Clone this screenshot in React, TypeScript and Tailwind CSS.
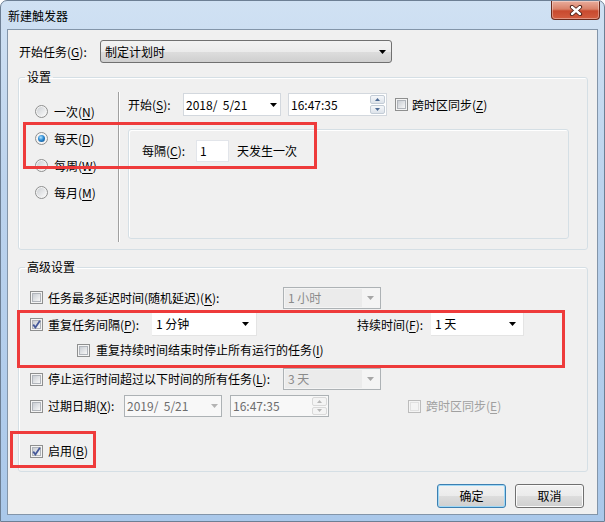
import type { ReactNode } from "react"

function K({ c }: { c: string }) {
  return <span className="underline decoration-1 underline-offset-[2px]">{c}</span>
}

function Arrow({ color = "#000" }: { color?: string }) {
  return (
    <svg width="7" height="4" viewBox="0 0 7 4" className="shrink-0">
      <path d="M0 0h7L3.5 4z" fill={color} />
    </svg>
  )
}

function Check({ checked, disabled, className = "" }: { checked?: boolean; disabled?: boolean; className?: string }) {
  return (
    <span
      className={`relative flex h-[13px] w-[13px] shrink-0 items-center justify-center border bg-[#f4f4f4] ${
        disabled ? "border-[#bcbcbc]" : "border-[#8e8f8f]"
      } ${className}`}
    >
      <span
        className={`h-[9px] w-[9px] border ${
          disabled ? "border-[#e1e1e1] bg-[#f4f4f4]" : "border-[#b0b4ba] bg-[linear-gradient(135deg,#c9cdd3,#f7f7f7)]"
        }`}
      />
      {checked && (
        <svg className="absolute left-[0px] top-[0px]" width="11" height="11" viewBox="0 0 11 11">
          <path d="M2.2 5.6 L4.4 8.4 L8.9 1.8" fill="none" stroke="#46599a" strokeWidth="1.8" />
        </svg>
      )}
    </span>
  )
}

function Radio({ checked }: { checked?: boolean }) {
  return (
    <span className="flex h-[13px] w-[13px] shrink-0 items-center justify-center rounded-full border border-[#8e8f8f] bg-[#f4f4f4]">
      <span
        className={
          checked
            ? "h-[7px] w-[7px] rounded-full bg-[radial-gradient(circle_at_40%_35%,#b3e4ff_0%,#2b8ad3_45%,#0d467f_100%)]"
            : "h-[9px] w-[9px] rounded-full bg-[linear-gradient(135deg,#cdd0d4,#fafafa)]"
        }
      />
    </span>
  )
}

function Spin({ disabled }: { disabled?: boolean }) {
  const c = disabled ? "#b7b7b7" : "#4d6a93"
  const btn = disabled
    ? "border-[#d9d9d9] bg-[#f4f4f4]"
    : "border-[#c3ccd6] bg-[linear-gradient(180deg,#f5f7fa,#dde3ea)]"
  return (
    <div className="flex h-full w-[16px] shrink-0 flex-col gap-[1px] py-[1px] pr-[1px]">
      <div className={`flex flex-1 items-center justify-center rounded-[2px] border ${btn}`}>
        <svg width="5" height="3" viewBox="0 0 5 3">
          <path d="M2.5 0L5 3H0z" fill={c} />
        </svg>
      </div>
      <div className={`flex flex-1 items-center justify-center rounded-[2px] border ${btn}`}>
        <svg width="5" height="3" viewBox="0 0 5 3">
          <path d="M0 0h5L2.5 3z" fill={c} />
        </svg>
      </div>
    </div>
  )
}

function DateBox({ value, disabled, size }: { value: string; disabled?: boolean; size: string }) {
  return (
    <div
      className={`flex items-center justify-between border pl-[2px] pr-[3px] ${size} ${
        disabled ? "border-[#adb2b5] bg-[#f8f8f8] text-[#6d6d6d]" : "border-[#d3d8de] bg-white"
      }`}
    >
      <span className="whitespace-pre">{value}</span>
      <Arrow color={disabled ? "#b4b4b4" : "#000"} />
    </div>
  )
}

function TimeBox({ disabled, size }: { disabled?: boolean; size: string }) {
  return (
    <div
      className={`flex items-center justify-between border pl-[2px] ${size} ${
        disabled ? "border-[#adb2b5] bg-[#f8f8f8] text-[#6d6d6d]" : "border-[#d3d8de] bg-white"
      }`}
    >
      <span>16:47:35</span>
      <Spin disabled={disabled} />
    </div>
  )
}

function DisCombo({ text }: { text: string }) {
  return (
    <div className="flex h-[22px] w-[98px] items-center border border-[#adb2b5] bg-[#f4f4f4] p-[1px] text-[#8a8a8a]">
      <span className="flex h-full flex-1 items-center bg-[#ebebeb] pl-[3px]">{text}</span>
      <span className="flex w-[17px] justify-center">
        <Arrow color="#a6a6a6" />
      </span>
    </div>
  )
}

function WhiteCombo({ text, size }: { text: string; size: string }) {
  return (
    <div className={`flex h-[23px] items-center justify-between border-b border-r border-[#e4e4e4] bg-white pl-[4px] pr-[7px] ${size}`}>
      <span>{text}</span>
      <Arrow />
    </div>
  )
}

function Btn({ children, primary }: { children: ReactNode; primary?: boolean }) {
  return (
    <button
      className={`flex h-[24px] w-[69px] items-center justify-center rounded-[3px] border bg-[linear-gradient(180deg,#f2f2f2_0%,#ebebeb_50%,#dddddd_51%,#cfcfcf_100%)] ${
        primary
          ? "border-[#3c7fb1] shadow-[inset_0_0_0_1px_#9fd8f6]"
          : "border-[#707070] shadow-[inset_0_0_0_1px_#fbfbfb]"
      }`}
    >
      {children}
    </button>
  )
}

const radios: { label: string; key: string; checked?: boolean }[] = [
  { label: "一次", key: "N" },
  { label: "每天", key: "D", checked: true },
  { label: "每周", key: "W" },
  { label: "每月", key: "M" },
]

export default function App() {
  return (
    <div className="relative h-[522px] w-[605px] overflow-hidden rounded-t-[7px] border border-[#6d7f94] bg-[linear-gradient(180deg,#d0e1f3_0%,#bcd3ed_35%,#aac8ea_100%)] font-['Noto_Sans_CJK_SC',sans-serif] text-[12px] leading-[16px] text-black">
      {/* title bar */}
      <div className="flex h-[28px] items-start justify-between">
        <span className="pl-[7px] pt-[7px] text-[12px]">新建触发器</span>
        <div className="mr-[4px] flex h-[19px] w-[49px] items-center justify-center rounded-b-[4px] border border-t-0 border-[#6b2a1c] bg-[linear-gradient(180deg,#e9ad9c_0%,#d98169_45%,#c84a2f_55%,#d35d40_100%)] shadow-[inset_0_0_0_1px_rgba(255,255,255,0.35)]">
          <svg width="14" height="11" viewBox="0 0 14 11">
            <path d="M3 2 L11 9 M11 2 L3 9" stroke="#4a1d14" strokeWidth="4.2" strokeLinecap="round" />
            <path d="M3 2 L11 9 M11 2 L3 9" stroke="#ffffff" strokeWidth="2.4" strokeLinecap="round" />
          </svg>
        </div>
      </div>

      {/* client area */}
      <div className="ml-[6px] h-[486px] w-[591px] border border-[#8395a9] bg-[#f0f0f0]">
        <div className="mt-[10px] flex items-center pl-[11px]">
          <span className="w-[81px]">
            开始任务(<K c="G" />):
          </span>
          <div className="flex h-[23px] w-[292px] items-center justify-between rounded-[3px] border border-[#707070] bg-[linear-gradient(180deg,#f2f2f2_0%,#ebebeb_50%,#dddddd_51%,#cfcfcf_100%)] pl-[4px] pr-[5px]">
            <span>制定计划时</span>
            <Arrow />
          </div>
        </div>

        {/* 设置 */}
        <fieldset className="ml-[10px] mt-[6px] w-[570px] rounded-[3px] border border-[#d5dfe5] shadow-[inset_1px_1px_0_#ffffff]">
          <legend className="ml-[6px] px-[2px] leading-[16px]">设置</legend>
          <div className="flex items-start pb-[7px] pt-[7px]">
            <div className="flex w-[99px] flex-col pl-[16px] pt-[6px]">
              {radios.map((r) => (
                <div key={r.key} className="flex h-[27px] items-center">
                  <Radio checked={r.checked} />
                  <span className="ml-[6px]">
                    {r.label}(<K c={r.key} />)
                  </span>
                </div>
              ))}
            </div>
            <div className="h-[150px] w-[2px] border-l border-r border-l-[#a0a0a0] border-r-white" />
            <div className="ml-[8px] flex flex-col pt-[1px]">
              <div className="flex h-[23px] items-center">
                <span className="w-[55px]">
                  开始(<K c="S" />):
                </span>
                <DateBox value="2018/  5/21" size="h-[23px] w-[98px]" />
                <div className="ml-[7px]">
                  <TimeBox size="h-[23px] w-[99px]" />
                </div>
                <Check className="ml-[8px]" />
                <span className="ml-[4px]">
                  跨时区同步(<K c="Z" />)
                </span>
              </div>
              <div className="mt-[13px] h-[110px] w-[441px] rounded-[3px] border border-[#d5dfe5] pl-[13px] pt-[10px] shadow-[inset_1px_1px_0_#ffffff]">
                <div className="flex items-center">
                  <span className="w-[54px]">
                    每隔(<K c="C" />):
                  </span>
                  <div className="flex h-[22px] w-[33px] items-center border border-[#e2e5ea] bg-white pl-[3px]">1</div>
                  <span className="ml-[8px]">天发生一次</span>
                </div>
              </div>
            </div>
          </div>
        </fieldset>

        {/* 高级设置 */}
        <fieldset className="ml-[10px] mt-[9px] w-[570px] rounded-[3px] border border-[#d5dfe5] shadow-[inset_1px_1px_0_#ffffff]">
          <legend className="ml-[6px] px-[2px] leading-[16px]">高级设置</legend>
          <div className="flex flex-col pb-[12px] pl-[11px] pt-[11px]">
            <div className="flex h-[23px] items-center">
              <div className="flex w-[253px] items-center">
                <Check />
                <span className="ml-[5px]">
                  任务最多延迟时间(随机延迟)(<K c="K" />):
                </span>
              </div>
              <DisCombo text="1 小时" />
            </div>

            <div className="mt-[4px] flex h-[23px] items-center">
              <div className="flex w-[122px] items-center">
                <Check checked />
                <span className="ml-[5px]">
                  重复任务间隔(<K c="P" />):
                </span>
              </div>
              <WhiteCombo text="1 分钟" size="w-[105px]" />
              <span className="ml-[100px] w-[74px]">
                持续时间(<K c="F" />):
              </span>
              <WhiteCombo text="1 天" size="w-[93px]" />
            </div>

            <div className="mt-[4px] flex h-[20px] items-center pl-[47px]">
              <Check />
              <span className="ml-[6px]">
                重复持续时间结束时停止所有运行的任务(<K c="I" />)
              </span>
            </div>

            <div className="mt-[8px] flex h-[22px] items-center">
              <div className="flex w-[253px] items-center">
                <Check />
                <span className="ml-[5px]">
                  停止运行时间超过以下时间的所有任务(<K c="L" />):
                </span>
              </div>
              <DisCombo text="3 天" />
            </div>

            <div className="mt-[5px] flex h-[22px] items-center">
              <div className="flex w-[94px] items-center">
                <Check />
                <span className="ml-[5px]">
                  过期日期(<K c="X" />):
                </span>
              </div>
              <DateBox value="2019/  5/21" disabled size="h-[22px] w-[98px]" />
              <div className="ml-[8px]">
                <TimeBox disabled size="h-[22px] w-[99px]" />
              </div>
              <Check disabled className="ml-[79px]" />
              <span className="ml-[5px] text-[#a0a0a0]">
                跨时区同步(<K c="E" />)
              </span>
            </div>

            <div className="mt-[26px] flex h-[16px] items-center">
              <Check checked />
              <span className="ml-[5px]">
                启用(<K c="B" />)
              </span>
            </div>
          </div>
        </fieldset>

        <div className="mt-[12px] flex justify-end gap-[9px] pr-[13px]">
          <Btn primary>确定</Btn>
          <Btn>取消</Btn>
        </div>
      </div>

      {/* red highlight boxes */}
      <div className="absolute left-[22px] top-[121px] h-[47px] w-[294px] border-[3px] border-[#ee3b3b]" />
      <div className="absolute left-[16px] top-[309px] h-[58px] w-[548px] border-[3px] border-[#ee3b3b]" />
      <div className="absolute left-[9px] top-[430px] h-[37px] w-[86px] border-[3px] border-[#ee3b3b]" />
    </div>
  )
}
